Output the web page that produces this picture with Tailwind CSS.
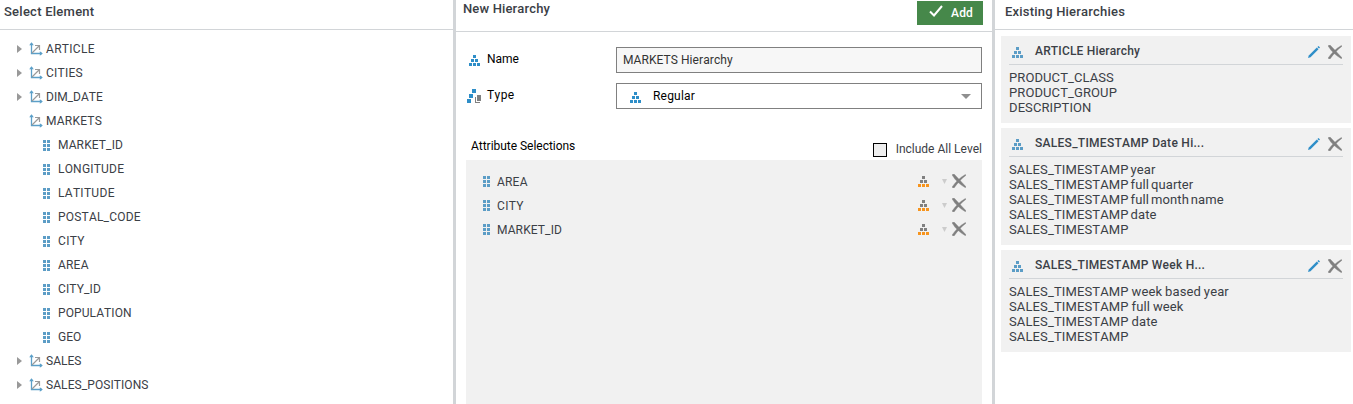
<!DOCTYPE html>
<html lang="en"><head><meta charset="utf-8"><title>Hierarchies</title>
<script src="https://cdn.jsdelivr.net/npm/@tailwindcss/browser@4"></script></head>
<body class="w-[1353px] h-[404px] overflow-hidden bg-white font-['Roboto',sans-serif] text-[12px] leading-6 text-[#3b4046] whitespace-nowrap [font-kerning:none]">
<svg class="hidden">
<symbol id="axes" viewBox="0 0 14 14"><path d="M2.500 1v10.500H13" fill="none" stroke="#5b9fc8" stroke-width="1.300"/><path d="M2.500 .3L4.800 3.200H.2zM13.800 11.500L10.800 9.200v4.600z" fill="#5b9fc8"/><path d="M3 11l7-7M6 3.500H10.500V8" fill="none" stroke="#9a9a9a" stroke-width="1.200"/></symbol>
<symbol id="grip" viewBox="0 0 7 11"><path d="M0 0h3v3H0zM4 0h3v3H4zM0 4h3v3H0zM4 4h3v3H4zM0 8h3v3H0zM4 8h3v3H4z" fill="#5c9dc6"/></symbol>
<symbol id="hier" viewBox="0 0 11 11"><path d="M4 0h3v3H4zM2 4h3v3H2zM6 4h3v3H6zM0 8h3v3H0zM4 8h3v3H4zM8 8h3v3H8z"/></symbol>
<symbol id="level" viewBox="0 0 11 11"><path d="M4 0h3v3H4zM2 4h3v3H2zM6 4h3v3H6z" fill="#808080"/><path d="M0 8h3v3H0zM4 8h3v3H4zM8 8h3v3H8z" fill="#f7941d"/></symbol>
<symbol id="cross" viewBox="0 0 14 14"><path d="M0 .8L2 0C5 2.800 9 7.500 14 12.800L13.400 13.700C8.500 11 3.500 7 0 .8zM13.400 .5L14 1.200C9.500 4.500 5.500 9 2 14L0 13.200C3.500 8 8 3.500 13.400 .5z" fill="#808080" stroke="#808080" stroke-width=".4"/></symbol>
<symbol id="pen" viewBox="0 0 12 12"><path d="M0 12L.8 9.500 8.800 1.500 10.500 3.200 2.500 11.200z" fill="#2e8ec8"/><path d="M9.400 1L10.600 0 12 1.400 11 2.600z" fill="#2e8ec8"/></symbol>
<symbol id="tri" viewBox="0 0 5 8"><path d="M0 0l5 4-5 4z" fill="#999"/></symbol>
</svg>
<div class="flex h-full">
<section class="w-[453px] shrink-0">
<h2 class="h-[30px] border-b border-[#d2d5d8] pl-1 font-medium text-[13px] tracking-[0.25px]">Select Element</h2>
<ul class="pt-[7px]">
<li class="flex h-6 items-center pl-[17px]"><svg class="w-[5px] h-2"><use href="#tri"/></svg><svg class="ml-[7px] w-[14px] h-[14px]"><use href="#axes"/></svg><span class="ml-[3px] tracking-[0.3px]">ARTICLE</span></li>
<li class="flex h-6 items-center pl-[17px]"><svg class="w-[5px] h-2"><use href="#tri"/></svg><svg class="ml-[7px] w-[14px] h-[14px]"><use href="#axes"/></svg><span class="ml-[3px] tracking-[0.25px]">CITIES</span></li>
<li class="flex h-6 items-center pl-[17px]"><svg class="w-[5px] h-2"><use href="#tri"/></svg><svg class="ml-[7px] w-[14px] h-[14px]"><use href="#axes"/></svg><span class="ml-[3px]">DIM_DATE</span></li>
<li class="flex h-6 items-center pl-[29px]"><svg class="w-[14px] h-[14px]"><use href="#axes"/></svg><span class="ml-[3px] tracking-[0.25px]">MARKETS</span></li>
<li class="flex h-6 items-center pl-[43px]"><svg class="w-[7px] h-[11px]"><use href="#grip"/></svg><span class="ml-2 tracking-[0.15px]">MARKET_ID</span></li>
<li class="flex h-6 items-center pl-[43px]"><svg class="w-[7px] h-[11px]"><use href="#grip"/></svg><span class="ml-2 tracking-[0.2px]">LONGITUDE</span></li>
<li class="flex h-6 items-center pl-[43px]"><svg class="w-[7px] h-[11px]"><use href="#grip"/></svg><span class="ml-2 tracking-[0.3px]">LATITUDE</span></li>
<li class="flex h-6 items-center pl-[43px]"><svg class="w-[7px] h-[11px]"><use href="#grip"/></svg><span class="ml-2 tracking-[0.2px]">POSTAL_CODE</span></li>
<li class="flex h-6 items-center pl-[43px]"><svg class="w-[7px] h-[11px]"><use href="#grip"/></svg><span class="ml-2 tracking-[0.35px]">CITY</span></li>
<li class="flex h-6 items-center pl-[43px]"><svg class="w-[7px] h-[11px]"><use href="#grip"/></svg><span class="ml-2 tracking-[0.2px]">AREA</span></li>
<li class="flex h-6 items-center pl-[43px]"><svg class="w-[7px] h-[11px]"><use href="#grip"/></svg><span class="ml-2 tracking-[0.15px]">CITY_ID</span></li>
<li class="flex h-6 items-center pl-[43px]"><svg class="w-[7px] h-[11px]"><use href="#grip"/></svg><span class="ml-2 tracking-[0.1px]">POPULATION</span></li>
<li class="flex h-6 items-center pl-[43px]"><svg class="w-[7px] h-[11px]"><use href="#grip"/></svg><span class="ml-2">GEO</span></li>
<li class="flex h-6 items-center pl-[17px]"><svg class="w-[5px] h-2"><use href="#tri"/></svg><svg class="ml-[7px] w-[14px] h-[14px]"><use href="#axes"/></svg><span class="ml-[3px]">SALES</span></li>
<li class="flex h-6 items-center pl-[17px]"><svg class="w-[5px] h-2"><use href="#tri"/></svg><svg class="ml-[7px] w-[14px] h-[14px]"><use href="#axes"/></svg><span class="ml-[3px] tracking-[0.08px]">SALES_POSITIONS</span></li>
</ul>
</section>
<section class="flex w-[542px] shrink-0 flex-col border-x-[3px] border-[#d2d5d8]">
<header class="flex h-8 justify-between border-b border-[#d2d5d8] pl-[7px] pr-[9px]"><h2 class="font-medium text-[13px] leading-[18px] tracking-[0.15px]">New Hierarchy</h2>
<button class="mt-px flex h-6 w-[66px] items-center bg-[#46884a] pl-3 font-medium text-white"><svg class="-mt-1 w-[14px] h-3" viewBox="0 0 14 12"><path d="M1 6.500l4 4L13 1" fill="none" stroke="#fff" stroke-width="2"/></svg><span class="ml-2 tracking-[0.2px]">Add</span></button></header>
<div class="flex flex-1 flex-col pl-[10px] pr-[10px] pt-[15px]">
<div class="flex h-[26px] text-black"><svg class="ml-[3px] mt-2 w-[11px] h-[11px] fill-[#2e8ec8]"><use href="#hier"/></svg><span class="ml-[7px] w-[129px]">Name</span><div class="flex-1 border border-[#808080] bg-[#f7f7f7] pl-[6px] text-[#333] tracking-[0.08px]">MARKETS Hierarchy</div></div>
<div class="mt-[10px] flex h-[26px] text-black"><svg class="ml-px mt-[6px] w-[14px] h-[14px]" viewBox="0 0 14 14"><path d="M5 0h4v4H5zM2 5h4v4H2zM0 10h4v4H0z" fill="#2e8ec8"/><path d="M10 6h4v6h-4zM8 8h1v5h4v1H8z" fill="#808080"/></svg><span class="ml-[6px] w-[129px] tracking-[0.4px]">Type</span><div class="flex flex-1 items-center border border-[#808080] pl-[13px] pr-[10px]"><svg class="mt-[3px] w-[11px] h-[11px] fill-[#2e8ec8]"><use href="#hier"/></svg><span class="ml-3 flex-1 tracking-[0.2px]">Regular</span><svg class="w-[10px] h-[5px] fill-[#8f8f8f]"><path d="M0 0h10L5 5z"/></svg></div></div>
<div class="mt-[25px] flex h-[26px] justify-between pl-[5px]"><span class="text-black tracking-[-0.03px]">Attribute Selections</span><label class="mt-[3px] flex h-6 items-center"><span class="mr-[9px] mt-[2px] h-[14px] w-[14px] border border-black bg-[#eee]"></span>Include All Level</label></div>
<ul class="flex-1 bg-[#f1f1f1] pt-[9px]">
<li class="flex h-6 items-center pl-[17px] pr-4"><svg class="w-[7px] h-[11px]"><use href="#grip"/></svg><span class="ml-[7px] flex-1 pt-[2px] tracking-[0.2px]">AREA</span><svg class="w-[11px] h-[11px]"><use href="#level"/></svg><svg class="ml-[13px] w-[5px] h-[5px] fill-[#ccc]"><path d="M0 0h5L2.500 5z"/></svg><svg class="ml-[5px] w-[14px] h-[14px]"><use href="#cross"/></svg></li>
<li class="flex h-6 items-center pl-[17px] pr-4"><svg class="w-[7px] h-[11px]"><use href="#grip"/></svg><span class="ml-[7px] flex-1 pt-[2px] tracking-[0.35px]">CITY</span><svg class="w-[11px] h-[11px]"><use href="#level"/></svg><svg class="ml-[13px] w-[5px] h-[5px] fill-[#ccc]"><path d="M0 0h5L2.500 5z"/></svg><svg class="ml-[5px] w-[14px] h-[14px]"><use href="#cross"/></svg></li>
<li class="flex h-6 items-center pl-[17px] pr-4"><svg class="w-[7px] h-[11px]"><use href="#grip"/></svg><span class="ml-[7px] flex-1 pt-[2px] tracking-[0.15px]">MARKET_ID</span><svg class="w-[11px] h-[11px]"><use href="#level"/></svg><svg class="ml-[13px] w-[5px] h-[5px] fill-[#ccc]"><path d="M0 0h5L2.500 5z"/></svg><svg class="ml-[5px] w-[14px] h-[14px]"><use href="#cross"/></svg></li>
</ul></div>
</section>
<section class="flex-1">
<h2 class="h-[30px] border-b border-[#d2d5d8] pl-[10px] font-medium text-[13px] tracking-[0.2px]">Existing Hierarchies</h2>
<div class="mt-[6px] flex flex-col gap-[5px] pl-[6px] pr-[2px] text-[13px] leading-[15px] tracking-[0.1px]">
<article class="h-[87px] bg-[#f1f1f1] px-2"><div class="flex h-[29px] items-center border-b border-[#d2d5d8] pl-[3px] pr-px"><svg class="mt-[5px] w-[11px] h-[11px] fill-[#5c9dc6]"><use href="#hier"/></svg><h3 class="ml-3 flex-1 pt-[2px] font-medium text-[12px] tracking-[0.18px]">ARTICLE Hierarchy</h3><svg class="mt-[3px] w-3 h-3"><use href="#pen"/></svg><svg class="ml-2 mt-[3px] w-[14px] h-[14px]"><use href="#cross"/></svg></div><p class="pt-[5px]">PRODUCT_CLASS<br>PRODUCT_GROUP<br>DESCRIPTION</p></article>
<article class="h-[117px] bg-[#f1f1f1] px-2"><div class="flex h-[29px] items-center border-b border-[#d2d5d8] pl-[3px] pr-px"><svg class="mt-[5px] w-[11px] h-[11px] fill-[#5c9dc6]"><use href="#hier"/></svg><h3 class="ml-3 flex-1 pt-[2px] font-medium text-[12px] tracking-[0.28px]">SALES_TIMESTAMP Date Hi...</h3><svg class="mt-[3px] w-3 h-3"><use href="#pen"/></svg><svg class="ml-2 mt-[3px] w-[14px] h-[14px]"><use href="#cross"/></svg></div><p class="pt-[5px] tracking-[0.13px] [word-spacing:-1.5px]">SALES_TIMESTAMP year<br>SALES_TIMESTAMP full quarter<br>SALES_TIMESTAMP full month name<br>SALES_TIMESTAMP date<br>SALES_TIMESTAMP</p></article>
<article class="h-[102px] bg-[#f1f1f1] px-2"><div class="flex h-[29px] items-center border-b border-[#d2d5d8] pl-[3px] pr-px"><svg class="mt-[5px] w-[11px] h-[11px] fill-[#5c9dc6]"><use href="#hier"/></svg><h3 class="ml-3 flex-1 pt-[2px] font-medium text-[12px] tracking-[0.25px]">SALES_TIMESTAMP Week H...</h3><svg class="mt-[3px] w-3 h-3"><use href="#pen"/></svg><svg class="ml-2 mt-[3px] w-[14px] h-[14px]"><use href="#cross"/></svg></div><p class="pt-[5px] tracking-[0.13px] [word-spacing:-0.5px]">SALES_TIMESTAMP week based year<br>SALES_TIMESTAMP full week<br>SALES_TIMESTAMP date<br>SALES_TIMESTAMP</p></article>
</div></section>
</div></body></html>
